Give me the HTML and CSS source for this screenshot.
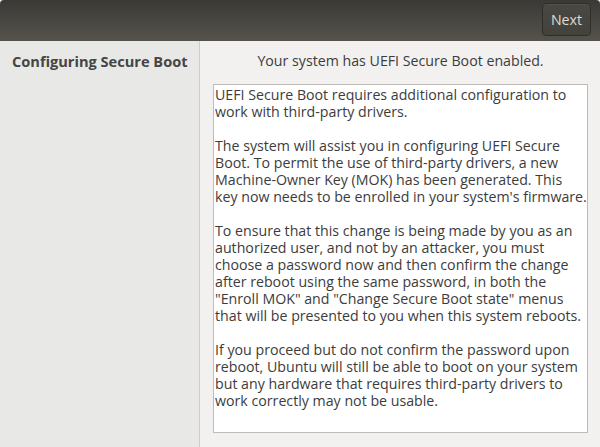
FILE: index.html
```html
<!DOCTYPE html>
<html>
<head>
<meta charset="utf-8">
<link rel="stylesheet" href="styles.css">
</head>
<body>
<div class="window">
  <header class="headerbar">
    <button class="next">Next</button>
  </header>
  <div class="main">
    <aside class="sidebar">
      <div class="step">Configuring Secure Boot</div>
    </aside>
    <section class="content">
      <div class="intro">Your system has UEFI Secure Boot enabled.</div>
      <div class="textbox">
        <p>UEFI Secure Boot requires additional configuration to<br>work with third-party drivers.</p>
        <p>The system will assist you in configuring UEFI Secure<br>Boot. To permit the use of third-party drivers, a new<br>Machine-Owner Key (MOK) has been generated. This<br>key now needs to be enrolled in your system's firmware.</p>
        <p>To ensure that this change is being made by you as an<br>authorized user, and not by an attacker, you must<br>choose a password now and then confirm the change<br>after reboot using the same password, in both the<br>"Enroll MOK" and "Change Secure Boot state" menus<br>that will be presented to you when this system reboots.</p>
        <p>If you proceed but do not confirm the password upon<br>reboot, Ubuntu will still be able to boot on your system<br>but any hardware that requires third-party drivers to<br>work correctly may not be usable.</p>
      </div>
    </section>
  </div>
</div>
</body>
</html>
```

FILE: styles.css
```css
html, body {
  margin: 0;
  padding: 0;
  width: 600px;
  height: 447px;
  overflow: hidden;
  background: #f2f1f0;
}
.window {
  display: flex;
  flex-direction: column;
  width: 600px;
  height: 447px;
  font-family: "Open Sans", "Noto Sans", sans-serif;
  font-size: 14.2px;
  color: #4c4c4c;
}
.headerbar {
  height: 41px;
  flex: none;
  box-sizing: border-box;
  display: flex;
  justify-content: flex-end;
  align-items: flex-start;
  padding: 3px 9px 0 0;
  background: linear-gradient(to bottom, #3a3935, #56534c);
  border-radius: 4px 4px 0 0;
}
.next {
  width: 49px;
  height: 33px;
  box-sizing: border-box;
  border: 1px solid #2f2e2a;
  border-radius: 4px;
  background: linear-gradient(to bottom, #4a4843, #44423d);
  box-shadow: inset 0 1px rgba(255,255,255,0.06);
  color: #dfdbd2;
  font-family: "Open Sans", "Noto Sans", sans-serif;
  font-size: 14.2px;
  padding: 0 0 1px 0;
}
.main {
  flex: 1;
  display: flex;
}
.sidebar {
  width: 200px;
  flex: none;
  box-sizing: border-box;
  background: #e8e8e7;
  border-right: 1px solid #cfcdca;
  padding: 10px 0 0 12px;
}
.step {
  font-weight: bold;
  font-size: 14.6px;
  color: #454545;
  line-height: 20px;
  white-space: nowrap;
}
.content {
  flex: 1;
  display: flex;
  flex-direction: column;
  padding: 10px 12px 12px 13px;
  background: #f2f1f0;
}
.intro {
  text-align: center;
  line-height: 20px;
  color: #3c3c3c;
  margin-bottom: 13px;
}
.textbox {
  width: 375px;
  height: 349px;
  box-sizing: border-box;
  background: #ffffff;
  border: 1px solid #bfbcb7;
  padding: 1px 1px;
  line-height: 17px;
  color: #3c3c3c;
  white-space: nowrap;
  overflow: hidden;
}
.textbox p {
  margin: 0 0 17px 0;
}
```
